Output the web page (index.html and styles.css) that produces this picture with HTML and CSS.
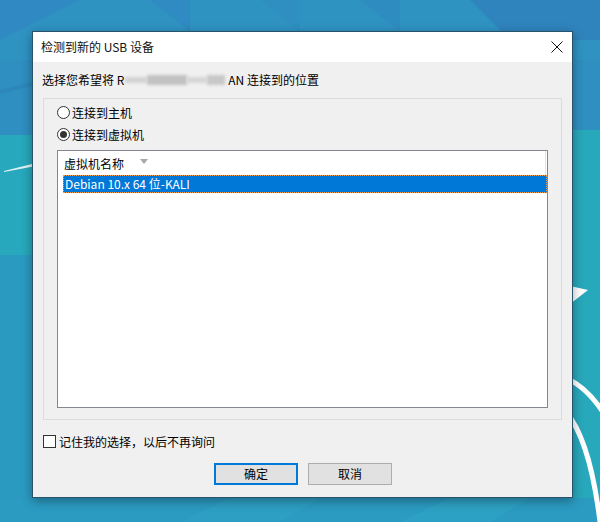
FILE: index.html
```html
<!DOCTYPE html>
<html lang="zh-CN">
<head>
<meta charset="utf-8">
<title>检测到新的 USB 设备</title>
<link rel="stylesheet" href="styles.css">
</head>
<body>
<div class="desktop">
  <svg class="wallpaper" width="600" height="522" viewBox="0 0 600 522" aria-hidden="true">
    <rect x="0" y="0" width="600" height="522" fill="#2b9ac1"/>
    <polygon points="0,0 600,0 600,60 0,60" fill="#2f93c2"/>
    <polygon points="0,0 80,0 0,40" fill="#3189c3"/>
    <polygon points="150,0 190,0 190,32" fill="#2f8bc2"/>
    <polygon points="260,0 300,0 300,32" fill="#2e8fc0"/>
    <polygon points="360,0 400,0 400,32" fill="#2f8cc1"/>
    <polygon points="470,0 600,0 600,40 510,40" fill="#2f84bd"/>
    <polygon points="0,60 40,60 40,135 0,135" fill="#2f8fc1"/>
    <polygon points="0,90 40,80 40,84 0,94" fill="#2b7fb3" opacity="0.5"/>
    <polygon points="0,135 40,135 40,255 0,255" fill="#27a8bc"/>
    <polygon points="560,60 600,60 600,130 560,130" fill="#2f8fc0"/>
    <polygon points="560,130 600,130 600,522 560,522" fill="#27a8bb"/>
    <polygon points="0,498 600,498 600,522 0,522" fill="#2b9bc2"/>
    <polygon points="180,522 230,498 320,498 280,522" fill="#2ea2c3" opacity="0.6"/>
    <polygon points="400,522 450,498 530,498 490,522" fill="#2ea5c3" opacity="0.6"/>
    <path d="M4 171 Q20 167 36 163 L36 166 Q20 169 4 172 Z" fill="#ffffff" opacity="0.85"/>
    <polygon points="570,286 588,290 570,304" fill="#ffffff"/>
    <path d="M566 378 Q588 388 604 414" stroke="#ffffff" stroke-width="5" fill="none"/>
    <path d="M566 412 Q590 440 600 522" stroke="#ffffff" stroke-width="5" fill="none"/>
  </svg>

  <div class="dialog">
    <div class="titlebar">
      <span class="title">检测到新的 USB 设备</span>
      <svg class="close" width="12" height="12" viewBox="0 0 12 12" aria-hidden="true">
        <path d="M0.5 0.5 L11.5 11.5 M11.5 0.5 L0.5 11.5" stroke="#111" stroke-width="1" fill="none"/>
      </svg>
    </div>
    <div class="body">
      <div class="prompt">
        <span>选择您希望将 R</span>
        <span class="redact" aria-label="已隐藏">
          <span class="blob blob-a"></span>
          <span class="blob blob-b"></span>
          <span class="blob blob-c"></span>
          <span class="blob blob-d"></span>
        </span>
        <span>AN 连接到的位置</span>
      </div>
      <div class="group">
        <div class="radio"><span class="radio-circle"></span><span>连接到主机</span></div>
        <div class="radio"><span class="radio-circle checked"></span><span>连接到虚拟机</span></div>
        <div class="list">
          <div class="list-header"><span>虚拟机名称</span><span class="sort-arrow"></span></div>
          <div class="row selected">Debian 10.x 64 位-KALI</div>
        </div>
      </div>
      <div class="check"><span class="check-box"></span><span>记住我的选择，以后不再询问</span></div>
      <div class="buttons">
        <button class="btn btn-default">确定</button>
        <button class="btn">取消</button>
      </div>
    </div>
  </div>
</div>
</body>
</html>
```

FILE: styles.css
```css
html, body {
  margin: 0;
  padding: 0;
}

body {
  width: 600px;
  height: 522px;
  overflow: hidden;
  font-family: "Noto Sans CJK SC", "Noto Sans", sans-serif;
  font-size: 12px;
  color: #000;
}

.desktop {
  position: relative;
  width: 600px;
  height: 522px;
  padding: 31px 0 0 32px;
  box-sizing: border-box;
}

.wallpaper {
  position: absolute;
  left: 0;
  top: 0;
}

.dialog {
  position: relative;
  width: 541px;
  box-sizing: border-box;
  border: 1px solid #27546b;
  background: #f0f0f0;
  box-shadow: 0 3px 10px rgba(0, 0, 0, 0.35);
}

.titlebar {
  height: 30px;
  background: #ffffff;
  display: flex;
  align-items: center;
  justify-content: space-between;
  padding: 0 9px 0 8px;
}

.title {
  line-height: 30px;
  color: #111;
}

.close {
  display: block;
}

.body {
  padding: 9px 0 12px 0;
}

.prompt {
  height: 18px;
  line-height: 18px;
  margin-left: 9px;
  white-space: nowrap;
  display: flex;
  align-items: center;
}

.redact {
  display: flex;
  align-items: center;
  width: 102px;
  height: 18px;
  margin: 0 1px 0 1px;
}

.blob {
  display: block;
  background: #c4c4c4;
  filter: blur(1.8px);
}

.blob-a {
  width: 22px;
  height: 6px;
  background: #d2d2d2;
}

.blob-b {
  width: 40px;
  height: 10px;
  background: #c2c2c2;
}

.blob-c {
  width: 20px;
  height: 6px;
  background: #d6d6d6;
}

.blob-d {
  width: 18px;
  height: 10px;
  background: #c8c8c8;
}

.group {
  margin: 9px 0 0 10px;
  width: 519px;
  height: 322px;
  box-sizing: border-box;
  border: 1px solid #dcdcdc;
  padding: 2px 13px 0 13px;
}

.radio {
  display: flex;
  align-items: center;
  height: 22px;
}

.radio-circle {
  width: 13px;
  height: 13px;
  box-sizing: border-box;
  border: 1px solid #333;
  border-radius: 50%;
  background: #fff;
  margin-right: 2px;
  display: flex;
  align-items: center;
  justify-content: center;
}

.radio-circle.checked::after {
  content: "";
  width: 7px;
  height: 7px;
  border-radius: 50%;
  background: #333;
}

.list {
  margin-top: 5px;
  width: 491px;
  height: 258px;
  box-sizing: border-box;
  border: 1px solid #828790;
  background: #fff;
}

.list-header {
  height: 24px;
  width: 488px;
  box-sizing: border-box;
  border-right: 1px solid #e5e5e5;
  display: flex;
  align-items: center;
  padding-left: 6px;
}

.sort-arrow {
  width: 0;
  height: 0;
  margin-left: 16px;
  margin-top: -3px;
  border-left: 4.5px solid transparent;
  border-right: 4.5px solid transparent;
  border-top: 5px solid #a8a8a8;
}

.row {
  margin-left: 5px;
  height: 18px;
  line-height: 16px;
  box-sizing: border-box;
  padding-left: 1px;
  border: 1px dotted transparent;
  white-space: nowrap;
}

.row.selected {
  background: #0078d7;
  color: #fff;
  border-color: #f0a050;
}

.check {
  display: flex;
  align-items: center;
  height: 18px;
  margin: 12px 0 0 10px;
}

.check-box {
  width: 13px;
  height: 13px;
  box-sizing: border-box;
  border: 1px solid #333;
  background: #fff;
  margin-right: 3px;
}

.buttons {
  display: flex;
  justify-content: center;
  gap: 10px;
  margin-top: 13px;
  padding-left: 1px;
}

.btn {
  width: 84px;
  height: 22px;
  box-sizing: border-box;
  border: 1px solid #adadad;
  background: #e1e1e1;
  font-family: "Noto Sans CJK SC", "Noto Sans", sans-serif;
  font-size: 12px;
  color: #000;
  padding: 0;
  margin: 0;
  line-height: 18px;
}

.btn-default {
  border: 2px solid #0078d7;
}
```
